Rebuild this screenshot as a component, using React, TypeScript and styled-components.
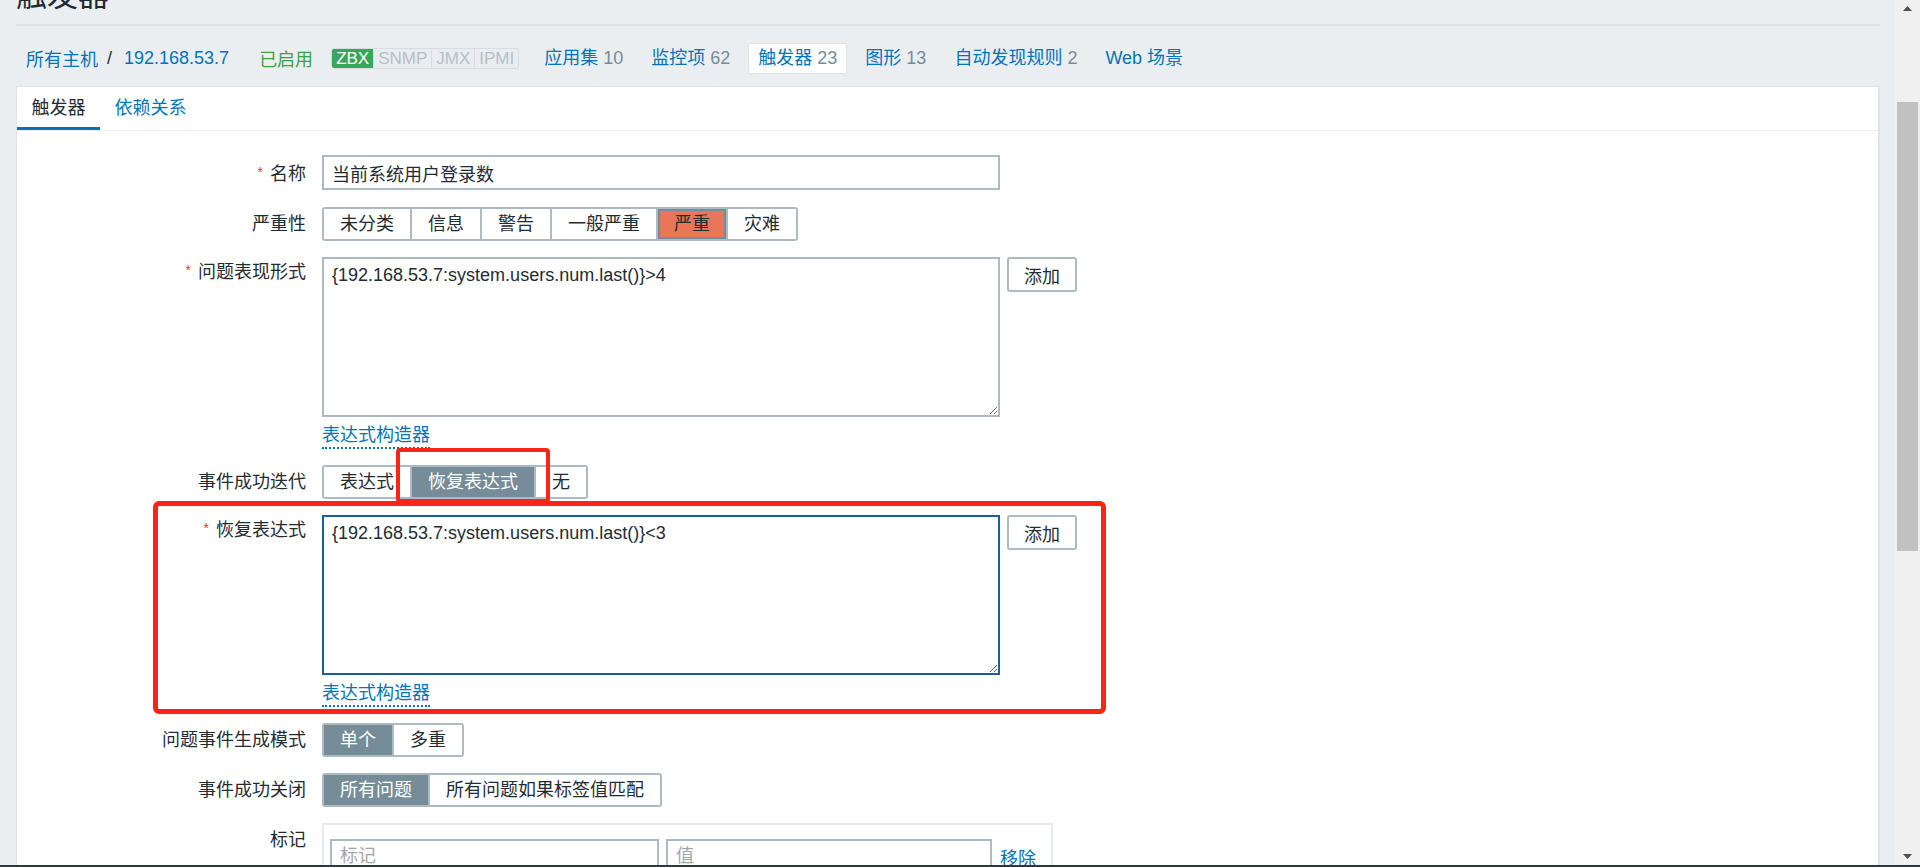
import React from 'react'
import styled, { createGlobalStyle } from 'styled-components'

const GlobalStyle = createGlobalStyle`
	html, body {
		margin: 0;
		padding: 0;
	}
	body {
		font-family: "Liberation Sans", "Noto Sans CJK SC", sans-serif;
		color: #1f2c33;
		background: #ebeef0;
		overflow: hidden;
	}
	* {
		box-sizing: border-box;
	}
`

const navItems = [
	{ label: '应用集', count: 10 },
	{ label: '监控项', count: 62 },
	{ label: '触发器', count: 23, active: true },
	{ label: '图形', count: 13 },
	{ label: '自动发现规则', count: 2 },
	{ label: 'Web 场景' }
]

const severities = ['未分类', '信息', '警告', '一般严重', '严重', '灾难']

const ArrowIcon = ({ down }: { down?: boolean }) => (
	<svg width='9' height='5' viewBox='0 0 9 5'>
		<polygon points={down ? '0,0 9,0 4.5,5' : '0,5 9,5 4.5,0'} fill='#505050' />
	</svg>
)

const App = () => {
	return (
		<Screen>
			<GlobalStyle />
			<Viewport>
				<Page>
					<Title>触发器</Title>
					<Nav>
						<NavLink>所有主机</NavLink>
						<Sep>/</Sep>
						<NavLink>192.168.53.7</NavLink>
						<Status>已启用</Status>
						<Badges>
							<Badge $on>ZBX</Badge>
							<Badge>SNMP</Badge>
							<Badge>JMX</Badge>
							<Badge>IPMI</Badge>
						</Badges>
						<NavTabs>
							{navItems.map((item) => (
								<NavItem key={item.label} $active={item.active}>
									<NavLink>{item.label}</NavLink>
									{item.count !== undefined && <Count>{item.count}</Count>}
								</NavItem>
							))}
						</NavTabs>
					</Nav>

					<Panel>
						<TabBar>
							<Tab $active>触发器</Tab>
							<Tab>依赖关系</Tab>
						</TabBar>

						<Form>
							<Row>
								<Label>
									<Req>*</Req>名称
								</Label>
								<TextInput defaultValue='当前系统用户登录数' />
							</Row>

							<Row>
								<Label>严重性</Label>
								<RadioGroup>
									{severities.map((s) => (
										<Option key={s} $severity={s === '严重'}>
											{s}
										</Option>
									))}
								</RadioGroup>
							</Row>

							<Row>
								<Label $multi>
									<Req>*</Req>问题表现形式
								</Label>
								<Field>
									<ExprLine>
										<TextArea defaultValue='{192.168.53.7:system.users.num.last()}>4' />
										<Button>添加</Button>
									</ExprLine>
									<BuilderLink>表达式构造器</BuilderLink>
								</Field>
							</Row>

							<Row>
								<Label>事件成功迭代</Label>
								<RadioGroup>
									<Option>表达式</Option>
									<Option $selected>
										恢复表达式
										<MarkSmall />
									</Option>
									<Option>无</Option>
								</RadioGroup>
							</Row>

							<Row>
								<MarkLarge />
								<Label $multi>
									<Req>*</Req>恢复表达式
								</Label>
								<Field>
									<ExprLine>
										<TextArea $focused defaultValue='{192.168.53.7:system.users.num.last()}<3' />
										<Button>添加</Button>
									</ExprLine>
									<BuilderLink>表达式构造器</BuilderLink>
								</Field>
							</Row>

							<Row>
								<Label>问题事件生成模式</Label>
								<RadioGroup>
									<Option $selected>单个</Option>
									<Option>多重</Option>
								</RadioGroup>
							</Row>

							<Row>
								<Label>事件成功关闭</Label>
								<RadioGroup>
									<Option $selected>所有问题</Option>
									<Option>所有问题如果标签值匹配</Option>
								</RadioGroup>
							</Row>

							<Row>
								<Label>标记</Label>
								<TagsBox>
									<TagRow>
										<TagInput $w={329} placeholder='标记' />
										<TagInput $w={326} placeholder='值' />
										<RemoveLink>移除</RemoveLink>
									</TagRow>
								</TagsBox>
							</Row>
						</Form>
					</Panel>
				</Page>

				<Scrollbar>
					<ScrollArrow>
						<ArrowIcon />
					</ScrollArrow>
					<Track>
						<Thumb />
					</Track>
					<ScrollArrow>
						<ArrowIcon down />
					</ScrollArrow>
				</Scrollbar>
			</Viewport>
			<BottomEdge />
		</Screen>
	)
}

const Screen = styled.div`
	height: 100vh;
	display: flex;
	flex-direction: column;
`

const Viewport = styled.div`
	flex: 1;
	min-height: 0;
	display: flex;
`

const Page = styled.div`
	flex: 1;
	min-width: 0;
	display: flex;
	flex-direction: column;
	padding: 0 15px 0 16px;
	overflow: hidden;
`

const Title = styled.h1`
	flex-shrink: 0;
	margin: -22px 0 0;
	padding-bottom: 10px;
	font-size: 31px;
	line-height: 36px;
	font-weight: normal;
	color: #1f2c33;
	border-bottom: 2px solid #dde3e6;
`

const Nav = styled.div`
	flex-shrink: 0;
	height: 60px;
	padding: 4px 0 0 10px;
	display: flex;
	align-items: center;
	font-size: 18px;
`

const NavLink = styled.a`
	color: #0275b8;
	text-decoration: none;
	cursor: pointer;
`

const Sep = styled.span`
	margin: 0 12px 0 9px;
	color: #1f2c33;
`

const Status = styled.span`
	margin-left: 30px;
	color: #429e47;
`

const Badges = styled.div`
	display: flex;
	margin-left: 18px;
	border: 1px solid #d5dde1;
	border-radius: 3px;
	overflow: hidden;
`

const Badge = styled.span<{ $on?: boolean }>`
	padding: 0 4px;
	line-height: 19px;
	font-size: 17px;
	background: ${(p) => (p.$on ? '#38a75c' : '#eaedef')};
	color: ${(p) => (p.$on ? '#ffffff' : '#b4c1c7')};

	& + & {
		border-left: 1px solid #d5dde1;
	}
`

const NavTabs = styled.div`
	display: flex;
	align-items: center;
	gap: 8px;
	margin-left: 15px;
`

const NavItem = styled.div<{ $active?: boolean }>`
	padding: 0 9px;
	line-height: 29px;
	border: 1px solid ${(p) => (p.$active ? '#dfe4e7' : 'transparent')};
	border-radius: 2px;
	background: ${(p) => (p.$active ? '#ffffff' : 'transparent')};
`

const Count = styled.span`
	margin-left: 5px;
	color: #768d99;
`

const Panel = styled.div`
	flex: 1 0 auto;
	background: #ffffff;
	border: 1px solid #dfe4e7;
	border-right-width: 2px;
	border-bottom: none;
	display: flex;
	flex-direction: column;
`

const TabBar = styled.div`
	flex-shrink: 0;
	height: 44px;
	display: flex;
	border-bottom: 1px solid #ebeef0;
`

const Tab = styled.div<{ $active?: boolean }>`
	height: 43px;
	padding: 2px 14.5px 0;
	line-height: 38px;
	font-size: 18px;
	color: ${(p) => (p.$active ? '#1f2c33' : '#0275b8')};
	border-bottom: 3px solid ${(p) => (p.$active ? '#0275b8' : 'transparent')};
`

const Form = styled.div`
	padding-top: 24px;
	display: flex;
	flex-direction: column;
	gap: 16px;
`

const Row = styled.div`
	position: relative;
	display: grid;
	grid-template-columns: 289px 1fr;
	column-gap: 16px;
	align-items: start;
`

const Label = styled.div<{ $multi?: boolean }>`
	text-align: right;
	font-size: 18px;
	line-height: ${(p) => (p.$multi ? '26px' : '34px')};
	color: #1f2c33;
`

const Req = styled.span`
	color: #e33734;
	font-size: 14px;
	margin-right: 7px;
	vertical-align: 3px;
`

const TextInput = styled.input`
	width: 678px;
	height: 35px;
	border: 2px solid #acbbc2;
	border-radius: 0;
	padding: 0 8px;
	font-family: inherit;
	font-size: 18px;
	color: #1f2c33;
	outline: none;
`

const Field = styled.div`
	display: flex;
	flex-direction: column;
	align-items: flex-start;
`

const ExprLine = styled.div`
	display: flex;
	align-items: flex-start;
	gap: 7px;
`

const TextArea = styled.textarea<{ $focused?: boolean }>`
	width: 678px;
	height: 160px;
	border: 2px solid ${(p) => (p.$focused ? '#1b5f99' : '#acbbc2')};
	border-radius: 0;
	padding: 4px 8px;
	font-family: inherit;
	font-size: 18px;
	line-height: 24px;
	color: #1f2c33;
	outline: none;
	resize: both;
	display: block;
`

const Button = styled.button`
	width: 70px;
	height: 35px;
	border: 2px solid #acbbc2;
	border-radius: 3px;
	background: #ffffff;
	font-family: inherit;
	font-size: 18px;
	color: #1f2c33;
	padding: 0;
`

const BuilderLink = styled.a`
	margin-top: 6px;
	line-height: 24px;
	font-size: 18px;
	color: #0275b8;
	border-bottom: 2px dotted #0275b8;
	cursor: pointer;
`

const RadioGroup = styled.div`
	justify-self: start;
	display: inline-flex;
	height: 34px;
	border: 2px solid #acbbc2;
	border-radius: 3px;
`

const Option = styled.div<{ $selected?: boolean; $severity?: boolean }>`
	position: relative;
	padding: 0 16px;
	line-height: 30px;
	font-size: 18px;
	white-space: nowrap;
	color: ${(p) => (p.$selected ? '#ffffff' : '#1f2c33')};
	background: ${(p) => (p.$severity ? '#e97659' : p.$selected ? '#768d99' : '#ffffff')};
	box-shadow: ${(p) => (p.$severity ? 'inset 0 0 0 2px #768d99' : 'none')};

	& + & {
		border-left: 2px solid #acbbc2;
	}
`

const MarkSmall = styled.span`
	position: absolute;
	left: -16px;
	top: -19px;
	width: 154px;
	height: 55px;
	border: 4px solid #fa2419;
	border-radius: 4px;
	pointer-events: none;
	z-index: 2;
`

const MarkLarge = styled.span`
	position: absolute;
	left: 136px;
	top: -14px;
	width: 953px;
	height: 213px;
	border: 5px solid #fa2419;
	border-radius: 6px;
	pointer-events: none;
	z-index: 1;
`

const TagsBox = styled.div`
	width: 731px;
	border: 2px solid #e6eaed;
	padding: 14px 8px 8px 6px;
`

const TagRow = styled.div`
	display: flex;
	align-items: center;
	gap: 7px;
`

const TagInput = styled.input<{ $w: number }>`
	width: ${(p) => p.$w}px;
	height: 35px;
	border: 2px solid #acbbc2;
	border-radius: 0;
	padding: 0 8px;
	font-family: inherit;
	font-size: 18px;
	outline: none;

	&::placeholder {
		color: #a3a7a9;
	}
`

const RemoveLink = styled.a`
	margin-left: 1px;
	font-size: 18px;
	color: #0275b8;
	cursor: pointer;
`

const Scrollbar = styled.div`
	flex-shrink: 0;
	width: 25px;
	background: #f0f0f0;
	display: flex;
	flex-direction: column;
	align-items: center;
`

const ScrollArrow = styled.div`
	flex-shrink: 0;
	height: 17px;
	display: flex;
	align-items: center;
	justify-content: center;
`

const Track = styled.div`
	flex: 1;
`

const Thumb = styled.div`
	width: 21px;
	height: 449px;
	margin-top: 85px;
	background: #c1c1c1;
`

const BottomEdge = styled.div`
	flex-shrink: 0;
	height: 2px;
	background: #2b3842;
`

export default App
